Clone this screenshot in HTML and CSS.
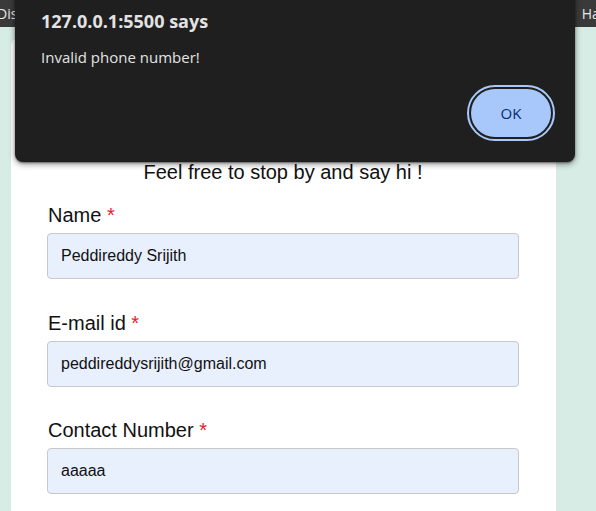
FILE: index.html
```html
<!DOCTYPE html>
<html lang="en">
<head>
<meta charset="utf-8">
<title>Contact</title>
<link rel="stylesheet" href="styles.css">
</head>
<body>
  <div class="topbar">
    <span class="tab-left">Discover</span>
    <span class="tab-right">Happy coding</span>
  </div>
  <main class="page">
    <section class="card">
      <p class="intro">Feel free to stop by and say hi !</p>
      <form class="form">
        <div class="field">
          <label class="label">Name <span class="req">*</span></label>
          <input class="input" type="text" value="Peddireddy Srijith">
        </div>
        <div class="field">
          <label class="label">E-mail id <span class="req">*</span></label>
          <input class="input" type="text" value="peddireddysrijith@gmail.com">
        </div>
        <div class="field">
          <label class="label">Contact Number <span class="req">*</span></label>
          <input class="input" type="text" value="aaaaa">
        </div>
      </form>
    </section>
  </main>
  <div class="dialog" role="alertdialog">
    <div class="dialog-title">127.0.0.1:5500 says</div>
    <div class="dialog-msg">Invalid phone number!</div>
    <div class="dialog-actions">
      <button class="ok" type="button">OK</button>
    </div>
  </div>
</body>
</html>
```
FILE: styles.css
```css
* { box-sizing: border-box; }
html, body { margin: 0; padding: 0; }
body {
  width: 596px;
  height: 511px;
  overflow: hidden;
  background: #d7ece5;
  font-family: "Liberation Sans", Arial, sans-serif;
  position: relative;
}
.topbar {
  height: 27px;
  background: #3a3a3a;
  display: flex;
  justify-content: space-between;
  align-items: center;
  overflow: hidden;
  font-family: "Open Sans", "Noto Sans", sans-serif;
  font-size: 14px;
  color: #e8e8e8;
  white-space: nowrap;
}
.tab-left { margin-left: -3px; }
.tab-right { margin-right: -75px; }
.page {
  padding: 11px 0 0 11px;
}
.card {
  width: 545px;
  background: #ffffff;
  border-radius: 8px 8px 0 0;
  padding: 123px 37px 40px 36px;
  min-height: 600px;
}
.intro {
  margin: 0;
  font-size: 20px;
  line-height: 23px;
  text-align: center;
  color: #111;
}
.form {
  margin-top: 20px;
}
.field {
  margin-bottom: 32.5px;
}
.label {
  display: block;
  font-size: 20px;
  line-height: 23px;
  color: #111;
  padding-left: 1px;
  margin-bottom: 6px;
}
.req { color: #e8202a; }
.input {
  display: block;
  width: 472px;
  height: 46px;
  border: 1px solid #c8c8c8;
  border-radius: 4px;
  background: #e8f0fe;
  padding: 0 13px;
  font-family: "Liberation Sans", Arial, sans-serif;
  font-size: 16px;
  color: #111;
  outline: none;
}
.dialog {
  position: absolute;
  left: 15px;
  top: -10px;
  width: 560px;
  height: 172px;
  background: #1f1f1f;
  border-radius: 8px;
  box-shadow: 0 2px 6px rgba(0,0,0,0.45), 0 1px 2px rgba(0,0,0,0.4);
  padding: 19px 24px 0 26px;
  font-family: "Open Sans", "Noto Sans", sans-serif;
  color: #e3e3e3;
}
.dialog-title {
  font-size: 18px;
  font-weight: 700;
  line-height: 25px;
}
.dialog-msg {
  margin-top: 13px;
  font-size: 15px;
  line-height: 20px;
}
.dialog-actions {
  display: flex;
  justify-content: flex-end;
  margin-top: 22px;
}
.ok {
  width: 80px;
  height: 48px;
  border: none;
  border-radius: 24px;
  background: #a8c7fa;
  color: #062e6f;
  font-family: "Open Sans", "Noto Sans", sans-serif;
  font-size: 15px;
  font-weight: 500;
  outline: 2px solid #a8c7fa;
  outline-offset: 2px;
}
```
